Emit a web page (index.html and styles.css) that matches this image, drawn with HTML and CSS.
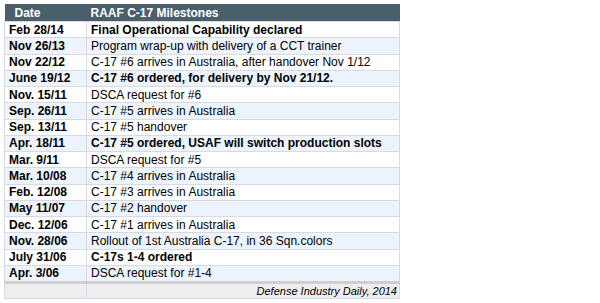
FILE: index.html
```html
<!DOCTYPE html>
<html>
<head>
<meta charset="utf-8">
<link rel="stylesheet" href="styles.css">
</head>
<body>
<table class="ms">
  <thead>
    <tr><th class="c-date">Date</th><th class="c-ev">RAAF C-17 Milestones</th></tr>
  </thead>
  <tbody>
    <tr class="b"><td>Feb 28/14</td><td>Final Operational Capability declared</td></tr>
    <tr><td>Nov 26/13</td><td>Program wrap-up with delivery of a CCT trainer</td></tr>
    <tr><td>Nov 22/12</td><td>C-17 #6 arrives in Australia, after handover Nov 1/12</td></tr>
    <tr class="b"><td>June 19/12</td><td>C-17 #6 ordered, for delivery by Nov 21/12.</td></tr>
    <tr><td>Nov. 15/11</td><td>DSCA request for #6</td></tr>
    <tr><td>Sep. 26/11</td><td>C-17 #5 arrives in Australia</td></tr>
    <tr><td>Sep. 13/11</td><td>C-17 #5 handover</td></tr>
    <tr class="b"><td>Apr. 18/11</td><td>C-17 #5 ordered, USAF will switch production slots</td></tr>
    <tr><td>Mar. 9/11</td><td>DSCA request for #5</td></tr>
    <tr><td>Mar. 10/08</td><td>C-17 #4 arrives in Australia</td></tr>
    <tr><td>Feb. 12/08</td><td>C-17 #3 arrives in Australia</td></tr>
    <tr><td>May 11/07</td><td>C-17 #2 handover</td></tr>
    <tr><td>Dec. 12/06</td><td>C-17 #1 arrives in Australia</td></tr>
    <tr><td>Nov. 28/06</td><td>Rollout of 1st Australia C-17, in 36 Sqn.colors</td></tr>
    <tr class="b"><td>July 31/06</td><td>C-17s 1-4 ordered</td></tr>
    <tr><td>Apr. 3/06</td><td>DSCA request for #1-4</td></tr>
  </tbody>
  <tfoot>
    <tr><td></td><td class="src">Defense Industry Daily, 2014</td></tr>
  </tfoot>
</table>
</body>
</html>
```

FILE: styles.css
```css
html, body {
  margin: 0;
  padding: 0;
  background: #ffffff;
}
body {
  padding: 4px;
  font-family: "Liberation Sans", Arial, Helvetica, sans-serif;
  font-size: 12px;
  color: #000;
}
.ms {
  border-collapse: collapse;
  width: 396px;
}
.ms th {
  background: #4b5f6b;
  color: #fff;
  font-weight: bold;
  text-align: left;
  height: 17px;
  padding: 0 4px;
  line-height: 14px;
  border: 0;
}
.ms th.c-date {
  width: 68px;
  padding-left: 10px;
}
.ms td {
  height: 15.25px;
  padding: 0 3px 0 4px;
  line-height: 14px;
  border: 1px solid #d9d9e3;
  white-space: nowrap;
}
.ms tbody td:first-child {
  font-weight: bold;
}
.ms tbody tr:nth-child(even) td {
  background: #edf4fd;
}
.ms tbody tr.b td {
  font-weight: bold;
}
.ms tfoot td {
  background: #eeeeee;
  border-top: 3px solid #cfcfcf;
  height: 14px;
  font-size: 11px;
  font-style: italic;
  line-height: 14px;
  padding: 0 2px 0 4px;
}
.ms tfoot td.src {
  text-align: right;
}
```
